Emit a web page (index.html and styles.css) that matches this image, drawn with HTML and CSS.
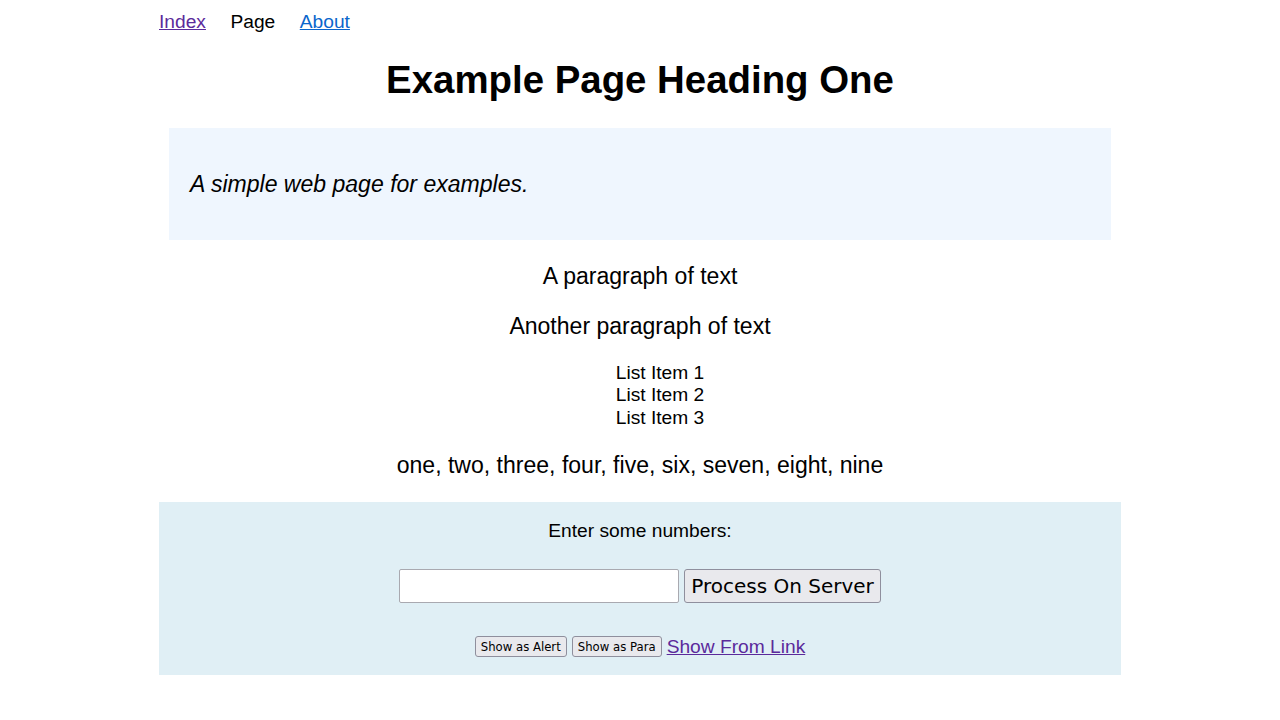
FILE: index.html
```html
<!DOCTYPE html>
<html lang="en">
<head>
<meta charset="utf-8">
<title>Example Page</title>
<link rel="stylesheet" href="styles.css">
</head>
<body>
<div class="page">
  <nav class="nav">
    <a class="nav-link visited" href="#">Index</a>
    <span class="nav-current">Page</span>
    <a class="nav-link" href="#">About</a>
  </nav>
  <h1 class="title">Example Page Heading One</h1>
  <div class="tagline"><p>A simple web page for examples.</p></div>
  <p class="para">A paragraph of text</p>
  <p class="para">Another paragraph of text</p>
  <div class="list-wrap">
    <ul class="list">
      <li>List Item 1</li>
      <li>List Item 2</li>
      <li>List Item 3</li>
    </ul>
  </div>
  <p class="para">one, two, three, four, five, six, seven, eight, nine</p>
  <div class="form-box">
    <div class="label">Enter some numbers:</div>
    <div class="row-main">
      <input class="num-input" type="text">
      <button class="btn-big">Process On Server</button>
    </div>
    <div class="row-small">
      <button class="btn-small">Show as Alert</button>
      <button class="btn-small">Show as Para</button>
      <a class="link-visited" href="#">Show From Link</a>
    </div>
  </div>
</div>
</body>
</html>
```

FILE: styles.css
```css
html, body {
  margin: 0;
  padding: 0;
  background: #ffffff;
}

body {
  font-family: "Liberation Sans", Arial, sans-serif;
  font-size: 19.2px;
  color: #000000;
}

.page {
  width: 962px;
  margin: 0 auto;
}

.nav {
  display: flex;
  gap: 24.5px;
  padding-top: 11px;
  line-height: 22px;
}

.nav-link {
  color: #0a66cc;
  text-decoration: underline;
}

.nav-link.visited {
  color: #5b2a9b;
}

.nav-current {
  color: #000000;
}

.title {
  font-size: 38.4px;
  font-weight: bold;
  text-align: center;
  margin: 25px 0 26px;
  line-height: 44px;
}

.tagline {
  margin: 0 10px;
  background: #eff6fe;
  padding: 43px 21px;
}

.tagline p {
  margin: 0;
  font-size: 23.04px;
  font-style: italic;
  line-height: 26px;
}

.para {
  font-size: 23.04px;
  text-align: center;
  margin: 23px 0;
  line-height: 26.5px;
}

.list-wrap {
  text-align: center;
}

.list {
  display: inline-block;
  text-align: left;
  list-style: none;
  margin: 0;
  padding: 0 0 0 40px;
  line-height: 22.4px;
}

.form-box {
  background: #e0eff5;
  padding: 18px 0 17px;
  text-align: center;
}

.label {
  line-height: 22px;
}

.row-main {
  margin-top: 27px;
  display: flex;
  justify-content: center;
  align-items: center;
  gap: 5px;
  height: 34px;
}

.num-input {
  box-sizing: border-box;
  width: 280px;
  height: 34px;
  margin: 0;
  border: 1px solid #a9a9b0;
  border-radius: 2px;
  background: #ffffff;
  padding: 2px 4px;
}

.btn-big {
  box-sizing: border-box;
  height: 34px;
  width: 197px;
  margin: 0;
  padding: 0 6px;
  font-family: "DejaVu Sans", Verdana, sans-serif;
  font-size: 20px;
  color: #000000;
  background: #e9e9ed;
  border: 1px solid #8f8f9d;
  border-radius: 3px;
}

.row-small {
  margin-top: 33px;
  display: flex;
  justify-content: center;
  align-items: center;
  gap: 5px;
  height: 22px;
}

.btn-small {
  box-sizing: border-box;
  height: 21px;
  margin: 0;
  padding: 0 5px;
  font-family: "DejaVu Sans", Verdana, sans-serif;
  font-size: 11.7px;
  color: #000000;
  background: #e9e9ed;
  border: 1px solid #8f8f9d;
  border-radius: 3px;
}

.link-visited {
  color: #5b2a9b;
  text-decoration: underline;
  line-height: 22px;
}
```
